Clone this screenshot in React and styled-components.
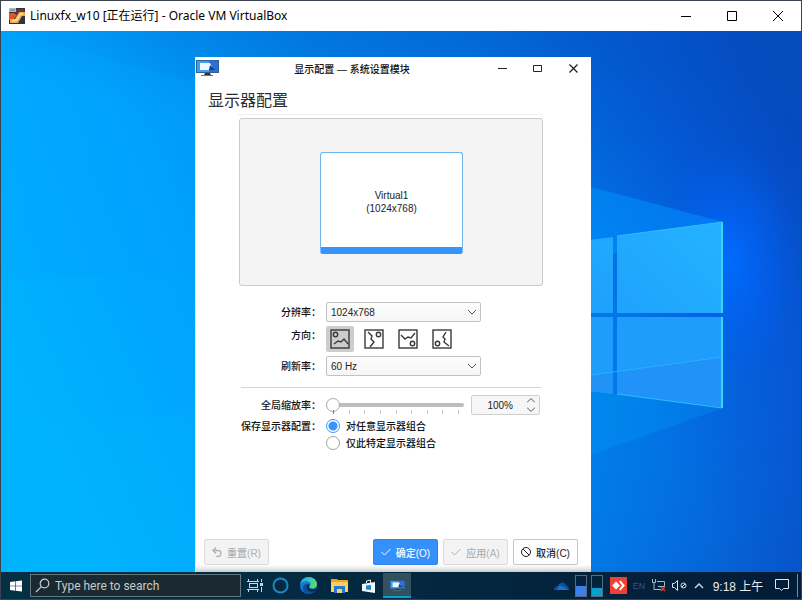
import React from "react";
import styled, { createGlobalStyle } from "styled-components";

const latin = `"Liberation Sans", "Noto Sans CJK SC", sans-serif`;

const GlobalStyle = createGlobalStyle`
  *, *::before, *::after { box-sizing: border-box; }
  html, body { margin: 0; background: #23262b; }
  body { font-family: ${latin}; font-size: 10px; color: #232323; }
  button, input, select { font: inherit; color: inherit; margin: 0; }
  button { padding: 0; border: 0; background: none; cursor: pointer; }
  svg { display: block; flex: none; }
`;

/* ---------- virtual machine frame ---------- */

const Machine = styled.div`
  display: flex;
  flex-direction: column;
  min-height: 100vh;
  border: 1px solid #3a4450;
`;

const MachineBar = styled.header`
  display: flex;
  align-items: center;
  height: 30px;
  padding-left: 8px;
  background: #fff;
  color: #000;
`;

const MachineTitle = styled.h1`
  flex: 1;
  margin: 0 0 0 5px;
  font: 400 12px/30px "Noto Sans", "Noto Sans CJK SC", sans-serif;
  white-space: nowrap;
`;

const FrameControl = styled.button`
  display: flex;
  align-items: center;
  justify-content: center;
  width: ${(p) => p.$width}px;
  height: ${(p) => p.$height}px;
`;

const Desktop = styled.main`
  position: relative;
  flex: 1;
  min-height: 541px;
  overflow: hidden;
  background: #0078e8;
`;

const Wallpaper = styled.svg`
  position: absolute;
  inset: 0;
  width: 100%;
  height: 100%;
`;

/* ---------- settings window ---------- */

const Window = styled.section`
  position: absolute;
  top: 26px;
  bottom: 0;
  left: 194px;
  display: flex;
  flex-direction: column;
  width: 396px;
  background: linear-gradient(to top, #c6cacc 0, #e4e6e7 3px, #fff 7px);
  border-left: 1px solid #d4effc;
`;

const WindowBar = styled.header`
  display: flex;
  align-items: flex-start;
  height: 25px;
`;

const WindowIcon = styled.div`
  padding-top: 3px;
`;

const WindowTitle = styled.h2`
  flex: 1;
  margin: 0;
  font-size: 10px;
  font-weight: 500;
  line-height: 25px;
  text-align: center;
  color: #111;
`;

const Heading = styled.h3`
  margin: 0;
  padding: 5px 0 0 12px;
  font-size: 16px;
  font-weight: 400;
  line-height: 27px;
  color: #2a2d30;
`;

const Content = styled.div`
  flex: 1;
  margin: 0 48px 0 43px;
  border-top: 1px solid #f1f1f1;
  padding-top: 3px;
`;

const Arrangement = styled.div`
  display: flex;
  justify-content: center;
  align-items: flex-start;
  height: 168px;
  padding: 33px 0 0 1px;
  border: 1px solid #cbcbcb;
  border-radius: 3px;
  background: #f4f4f4;
`;

const Screen = styled.div`
  display: flex;
  flex-direction: column;
  align-items: center;
  justify-content: center;
  width: 143px;
  height: 102px;
  padding-top: 4px;
  border: 1px solid #71b2f5;
  border-bottom: 7px solid #3794fb;
  border-radius: 3px;
  background: #fff;
  line-height: 13px;
`;

const Form = styled.form`
  display: grid;
  grid-template-columns: 80px 1fr;
  column-gap: 5px;
  padding: 0 2px;
`;

const Fields = styled.div`
  grid-column: 1 / -1;
  display: grid;
  grid-template-columns: subgrid;
  row-gap: ${(p) => p.$gap}px;
  align-items: center;
  padding-top: ${(p) => p.$top}px;
`;

const FieldName = styled.label`
  align-self: ${(p) => (p.$top ? "start" : "center")};
  padding-top: 2px;
  line-height: 16px;
  font-weight: 500;
  white-space: nowrap;
  text-align: right;
  color: #111;
`;

const Divider = styled.hr`
  grid-column: 1 / -1;
  width: 100%;
  margin: 11px 0 0;
  border: 0;
  border-top: 1px solid #d4d4d4;
`;

const SelectBox = styled.div`
  position: relative;
  width: 155px;
  svg {
    position: absolute;
    top: 6px;
    right: 5px;
    color: #555;
    pointer-events: none;
  }
`;

const Select = styled.select`
  display: block;
  width: 100%;
  height: 20px;
  padding: 0 4px;
  appearance: none;
  border: 1px solid #c2c2c2;
  border-radius: 2px;
  background: linear-gradient(#fdfdfd, #f6f6f6);
`;

const Orientations = styled.div`
  display: flex;
  gap: 6px;
`;

const OrientationButton = styled.button`
  display: flex;
  align-items: center;
  justify-content: center;
  width: 28px;
  height: 26px;
  border-radius: 2px;
  background: ${(p) => (p["aria-pressed"] ? "#cdcdcd" : "transparent")};
  color: #3a3a3a;
`;

const ScaleRow = styled.div`
  display: flex;
  align-items: center;
  gap: 7px;
`;

const ScaleTrack = styled.div`
  width: 138px;
  height: 20px;
`;

const Range = styled.input`
  display: block;
  width: 100%;
  height: 14px;
  margin: 3px 0 0;
  appearance: none;
  background: transparent;
  &::-webkit-slider-runnable-track {
    height: 4px;
    border-radius: 2px;
    background: #bdbdbd;
  }
  &::-webkit-slider-thumb {
    appearance: none;
    width: 14px;
    height: 14px;
    margin-top: -5px;
    border: 1px solid #a9a9a9;
    border-radius: 50%;
    background: #fff;
  }
`;

const Ticks = styled.div`
  display: flex;
  justify-content: space-between;
  margin-top: -2px;
  padding: 0 5px 0 7px;
`;

const Tick = styled.span`
  width: 1px;
  height: 4px;
  background: ${(p) => (p.$active ? "#3794fb" : "#c9c9c9")};
`;

const SpinBox = styled.div`
  display: flex;
  align-items: center;
  width: 69px;
  height: 20px;
  border: 1px solid #cfcfcf;
  border-radius: 2px;
  background: #f6f6f6;
`;

const SpinInput = styled.input`
  width: 41px;
  padding: 0;
  border: 0;
  background: transparent;
  text-align: right;
`;

const SpinArrows = styled.div`
  display: flex;
  flex: 1;
  flex-direction: column;
  align-items: center;
  padding-left: 10px;
  color: #555;
`;

const SpinButton = styled.button`
  display: flex;
  align-items: center;
  justify-content: center;
  width: 12px;
  height: 9px;
`;

const RadioGroup = styled.div`
  display: flex;
  flex-direction: column;
  font-weight: 500;
  color: #111;
`;

const Choice = styled.label`
  display: flex;
  align-items: center;
  gap: 6px;
  height: 17px;
`;

const Radio = styled.input`
  width: 14px;
  height: 14px;
  appearance: none;
  border: 1px solid #a2a2a2;
  border-radius: 50%;
  background: #fff;
  &:checked {
    border-color: #3794fb;
    background: radial-gradient(#3794fb 0 4px, #fff 5px);
  }
`;

const Actions = styled.footer`
  display: flex;
  gap: 5px;
  padding: 0 13px 7px 8px;
`;

const palettes = {
  plain: { bg: "#fefefe", line: "#c6c6c6", ink: "#1d1d1d" },
  muted: { bg: "#f3f3f3", line: "#dadada", ink: "#b0b0b0" },
  primary: { bg: "#3590fa", line: "#2e84ec", ink: "#fff" },
};

const ActionButton = styled.button`
  display: flex;
  align-items: center;
  justify-content: center;
  gap: 5px;
  width: 65px;
  height: 26px;
  margin-right: ${(p) => (p.$spread ? "auto" : "0")};
  border: 1px solid ${(p) => palettes[p.$tone].line};
  border-radius: 2px;
  background: ${(p) => palettes[p.$tone].bg};
  color: ${(p) => palettes[p.$tone].ink};
  font-weight: 500;
  white-space: nowrap;
`;

/* ---------- taskbar ---------- */

const Taskbar = styled.nav`
  display: flex;
  align-items: center;
  height: 27px;
  background: linear-gradient(to right, #043044, #03283f 50%, #031c37);
  color: #d8e0e6;
`;

const TaskButton = styled.button`
  display: flex;
  align-items: center;
  justify-content: center;
  width: ${(p) => p.$width}px;
  height: 25px;
  border-top: 2px solid transparent;
  border-bottom: 2px solid ${(p) => (p.$active ? "#0b9fd0" : "transparent")};
  background: ${(p) => (p.$active ? "#33505f" : "transparent")};
`;

const SearchBox = styled.label`
  display: flex;
  align-items: center;
  gap: 5px;
  width: 211px;
  height: 23px;
  padding-left: 4px;
  border: 1px solid #65757c;
  background: #1b2a31;
`;

const SearchInput = styled.input`
  flex: 1;
  min-width: 0;
  padding: 0;
  border: 0;
  outline: 0;
  background: transparent;
  font-family: Roboto, sans-serif;
  font-size: 12px;
  &::placeholder { color: #c3cacd; opacity: 1; }
`;

const Tray = styled.div`
  display: flex;
  align-items: center;
  align-self: stretch;
  margin-left: auto;
`;

const TrayButton = styled.button`
  display: flex;
  align-items: center;
  justify-content: center;
  width: ${(p) => p.$width}px;
  height: 27px;
`;

const Language = styled(TrayButton)`
  font-size: 9px;
  color: #35518f;
`;

const Clock = styled.time`
  width: 56px;
  font-size: 12px;
  text-align: center;
  white-space: nowrap;
  color: #e8edf0;
`;

const PeekDesktop = styled.button`
  width: 4px;
  height: 23px;
  border-left: 1px solid #7f8c99;
`;

const Meter = styled.div`
  display: flex;
  align-items: flex-end;
  width: 12px;
  height: 22px;
  border: 1px solid #566a7c;
`;

const MeterFill = styled.div`
  width: 100%;
  height: ${(p) => p.$level}px;
  background: ${(p) => p.$color};
`;

/* ---------- drawings ---------- */

const WallpaperArt = () => (
  <Wallpaper viewBox="1 31 800 541" preserveAspectRatio="none" aria-hidden="true">
    <defs>
      <linearGradient id="base" gradientUnits="userSpaceOnUse" x1="60" y1="480" x2="800" y2="150">
        <stop offset="0" stopColor="#00b2ff" />
        <stop offset="0.25" stopColor="#00a3fc" />
        <stop offset="0.5" stopColor="#0086ec" />
        <stop offset="0.7" stopColor="#0078e8" />
        <stop offset="0.88" stopColor="#0458dc" />
        <stop offset="1" stopColor="#0548c4" />
      </linearGradient>
      <linearGradient id="shade" gradientUnits="userSpaceOnUse" x1="520" y1="20" x2="470" y2="200">
        <stop offset="0" stopColor="#0450b8" stopOpacity="0.45" />
        <stop offset="1" stopColor="#0450b8" stopOpacity="0" />
      </linearGradient>
      <linearGradient id="beam" x1="0" y1="0" x2="1" y2="0">
        <stop offset="0" stopColor="#00a4ff" stopOpacity="0.25" />
        <stop offset="1" stopColor="#0090ff" stopOpacity="0.55" />
      </linearGradient>
      <radialGradient id="glow">
        <stop offset="0" stopColor="#006cff" stopOpacity="0.95" />
        <stop offset="1" stopColor="#0060f0" stopOpacity="0" />
      </radialGradient>
      <linearGradient id="pane" x1="0" y1="0.8" x2="1" y2="0.4">
        <stop offset="0" stopColor="#1c98fb" />
        <stop offset="1" stopColor="#23b0ff" />
      </linearGradient>
      <linearGradient id="corner" gradientUnits="userSpaceOnUse" x1="600" y1="420" x2="800" y2="560">
        <stop offset="0" stopColor="#0a60d8" stopOpacity="0" />
        <stop offset="1" stopColor="#0a4cc0" stopOpacity="0.7" />
      </linearGradient>
    </defs>
    <rect x="1" y="31" width="800" height="541" fill="url(#base)" />
    <rect x="1" y="31" width="800" height="541" fill="url(#shade)" />
    <rect x="1" y="31" width="800" height="541" fill="url(#corner)" />
    <ellipse cx="730" cy="262" rx="68" ry="120" fill="url(#glow)" />
    <path d="M723 222 591 187 0 30v250l591-20z" fill="url(#beam)" />
    <path d="M723 408 591 391 0 425v147h260z" fill="#00b8ff" opacity="0.18" />
    <path d="M480 254 613 237v76H480zM617 236l106-14v91H617z" fill="url(#pane)" />
    <path d="M480 317h133v77l-133-17zM617 317h106v91l-106-14z" fill="#1f9dfd" />
    <path d="m480 391 133-19v22l-133-17zM617 371l106-14v51l-106-14z" fill="#2092f8" />
    <path d="m591 375 132-18" stroke="#2fb7ff" strokeWidth="1" opacity="0.8" />
    <path d="m617 236 105-14m0 186-105-14" fill="none" stroke="#3cc4fd" strokeWidth="1" opacity="0.8" />
    <path d="M722 222v91m0 4v91" stroke="#35d6fc" strokeWidth="2" />
  </Wallpaper>
);

const AppMark = () => (
  <svg width="16" height="16" viewBox="0 0 16 16" aria-hidden="true">
    <rect width="16" height="16" fill="#30343f" />
    <path d="M0 5h5l3 2-3 4-5 1z" fill="#e2551f" />
    <path d="M1 15v-4h5l4-7h6v4h-3l-4 7z" fill="#f6a840" />
    <path d="M3 14v-2l4-1 4-6h3v2h-2l-4 6z" fill="#fbd79a" />
    <path d="M8 1h7v3h-5L8 7 6 4z" fill="#6b3434" />
    <path d="M0 0h7v4H0z" fill="#b9bec6" />
    <path d="M1 2h5" stroke="#666c78" />
  </svg>
);

const DisplayMark = ({ width = 23, height = 17 }) => (
  <svg width={width} height={height} viewBox="0 0 23 17" aria-hidden="true">
    <path d="M0 0h23v13H0z" fill="#35618f" />
    <path d="M1 1h14v11H1z" fill="#36a1f5" />
    <path d="M13 1h9v11h-9z" fill="#2a6fdc" />
    <path d="M4 3h10l3 6v1H4z" fill="#eef8fe" />
    <path d="m14 5 5 5h-6z" fill="#123f86" />
    <path d="M9 13h5l1 2H8z" fill="#2b333b" />
    <path d="M5 15h12v1H5z" fill="#6c7880" />
  </svg>
);

const Glyph = ({ size, d, width = 1, height = size }) => (
  <svg
    width={size}
    height={height}
    viewBox={`0 0 ${size} ${height}`}
    fill="none"
    stroke="currentColor"
    strokeWidth={width}
    aria-hidden="true"
  >
    <path d={d} />
  </svg>
);

const orientationArt = [
  { name: "横向", dot: [5.5, 5.5], line: "m4 15 4-3 3 1 3-3 4 5" },
  { name: "向右旋转", dot: [14.5, 5.5], line: "m4 3 4 4-1 3 3 3-4 5" },
  { name: "倒置", dot: [14.5, 14.5], line: "m3 6 4 4 3-2 3 1 4-5" },
  { name: "向左旋转", dot: [5.5, 14.5], line: "m14 3-3 5 2 2-1 3 5 4" },
];

const OrientationArt = ({ dot, line }) => (
  <svg width="20" height="20" viewBox="0 0 20 20" fill="none" stroke="currentColor" strokeWidth="1.4" aria-hidden="true">
    <rect x="1" y="1" width="18" height="18" />
    <circle cx={dot[0]} cy={dot[1]} r="2.2" />
    <path d={line} />
  </svg>
);

const StartMark = () => (
  <svg width="12" height="12" viewBox="0 0 12 12" fill="#fff" aria-hidden="true">
    <path d="M0 2l5-.7v4.400H0zM5.600 1.200 12 .4v5.300H5.600zM0 6.300h5v4.400L0 10zM5.600 6.300H12v5.300l-6.400-.8z" />
  </svg>
);

const SearchMark = () => (
  <svg width="15" height="15" viewBox="0 0 15 15" fill="none" stroke="#c6d0d4" strokeWidth="1.2" aria-hidden="true">
    <circle cx="9.5" cy="5.5" r="4.3" />
    <path d="M6.400 8.600 1 14" />
  </svg>
);

const TaskViewMark = () => (
  <svg width="16" height="13" viewBox="0 0 16 13" fill="none" stroke="#cdd8dd" aria-hidden="true">
    <rect x="2.5" y="4.5" width="8" height="4" />
    <path d="M0 2.500h12M0 10.500h12M1.500 0v2M10.500 0v2M1.500 11v2M10.500 11v2M14.500 0v3M14.500 8v5" />
    <rect x="13" y="4" width="3" height="3" fill="#cdd8dd" stroke="none" />
  </svg>
);

const CortanaMark = () => (
  <svg width="17" height="17" viewBox="0 0 17 17" fill="none" aria-hidden="true">
    <circle cx="8.5" cy="8.5" r="7" stroke="#1c86c4" strokeWidth="2" />
  </svg>
);

const EdgeMark = () => (
  <svg width="17" height="17" viewBox="0 0 24 24" aria-hidden="true">
    <defs>
      <linearGradient id="edgeTop" x1="0" y1="0" x2="1" y2="0.3">
        <stop offset="0" stopColor="#1f9be0" />
        <stop offset="0.6" stopColor="#34c8c8" />
        <stop offset="1" stopColor="#5edb58" />
      </linearGradient>
    </defs>
    <circle cx="12" cy="12" r="12" fill="#1478cf" />
    <path d="M0 11C1 4 6 0 12 0c7 0 12 5 12 10 0 4-3 6-6 6-3 0-5-1-5-2s2-1 2-4c0-2-2-4-5-4-5 0-9 2-10 5z" fill="url(#edgeTop)" />
    <path d="M9 12c-1 5 3 9 8 9 2 0 4-1 5-2-2 3-6 5-10 5-5-1-8-4-8-8 0-3 2-6 5-6 2 0 3 1 3 1-2 0-3 1-3 1z" fill="#0c4f9e" />
    <path d="M13 14c0 2 3 4 6 3 1 0 3-1 4-2l-1 4c-2 2-4 2-6 2-4 0-7-3-7-7 0-2 2-4 4-4 1 2-1 3 0 4z" fill="#062f4a" />
  </svg>
);

const FolderMark = () => (
  <svg width="17" height="15" viewBox="0 0 17 15" aria-hidden="true">
    <path d="M0 1h6l1 1h10v3H0z" fill="#e9a529" />
    <path d="M0 4h17v10H0z" fill="#fbd05b" />
    <path d="M3 8h11v7H3z" fill="#2377d4" />
    <path d="M6 11h5v4H6z" fill="#fbd05b" />
  </svg>
);

const StoreMark = () => (
  <svg width="13" height="14" viewBox="0 0 13 14" aria-hidden="true">
    <path d="M4.500 4V2l4-1v3" fill="none" stroke="#e8f0f4" />
    <path d="m0 5 13-2v11L0 12z" fill="#f2f7fa" />
    <path d="m4 6.500 5-.5v5l-5-.5z" fill="#1687d9" />
  </svg>
);

const CloudMark = () => (
  <svg width="15" height="10" viewBox="0 0 15 10" aria-hidden="true">
    <path d="M0 9c0-3 2-4 4-4 1-4 6-5 8-1 2 1 3 3 3 5z" fill="#0f4f9e" />
    <path d="M3 9c1-4 3-5 5-4l6 4z" fill="#1a72cc" />
  </svg>
);

const RemoteMark = () => (
  <svg width="17" height="17" viewBox="0 0 17 17" aria-hidden="true">
    <rect width="17" height="17" fill="#ee4035" />
    <path d="m2 8.500 4-4 4 4-4 4z" fill="#fff" />
    <path d="m9 4.500 1.500-1L15 8.500l-4.500 5-1.500-1 3-4z" fill="#fff" />
  </svg>
);

const NetworkMark = () => (
  <svg width="15" height="13" viewBox="0 0 15 13" fill="none" stroke="#aab8c3" aria-hidden="true">
    <path d="M1.500 0v3.500h3V0M3 4v6.500h5M6 2.500h7.500v5H7M8 10.500h2" />
    <path d="m10 8 4 4m0-4-4 4" stroke="#d83b3b" strokeWidth="1.5" />
  </svg>
);

const VolumeMark = () => (
  <svg width="15" height="11" viewBox="0 0 15 11" fill="none" stroke="#dfe6ea" aria-hidden="true">
    <path d="M.5 3.500h2l3-3v10l-3-3h-2z" />
    <circle cx="11.5" cy="5.500" r="2.5" />
    <path d="m10 7 3-3" />
  </svg>
);

const NoticeMark = () => (
  <svg width="14" height="13" viewBox="0 0 14 13" fill="none" stroke="#dfe6ea" aria-hidden="true">
    <path d="M.5 .5h13v9h-5l-2 2-2-2h-4z" />
  </svg>
);

/* ---------- page ---------- */

function Dropdown({ id, value, options }) {
  return (
    <SelectBox>
      <Select id={id} defaultValue={value}>
        {options.map((o) => (
          <option key={o}>{o}</option>
        ))}
      </Select>
      <Glyph size={8} d="m0 2 4 4 4-4" />
    </SelectBox>
  );
}

function DisplaySettings() {
  const [orientation, setOrientation] = React.useState(0);
  const [scale, setScale] = React.useState(100);
  const step = (by) => setScale((s) => Math.min(300, Math.max(100, s + by)));

  return (
    <Window aria-labelledby="window-title">
      <WindowBar>
        <WindowIcon><DisplayMark /></WindowIcon>
        <WindowTitle id="window-title">显示配置 — 系统设置模块</WindowTitle>
        <FrameControl $width={35} $height={23} aria-label="最小化">
          <Glyph size={9} d="M0 4.500h9" />
        </FrameControl>
        <FrameControl $width={35} $height={23} aria-label="最大化">
          <Glyph size={9} d="M.5 1.500h8v6h-8z" />
        </FrameControl>
        <FrameControl $width={36} $height={23} aria-label="关闭">
          <Glyph size={9} d="m.5 .5 8 8m0-8-8 8" width={1.3} />
        </FrameControl>
      </WindowBar>
      <Heading>显示器配置</Heading>
      <Content>
        <Arrangement>
          <Screen>
            <span>Virtual1</span>
            <span>(1024x768)</span>
          </Screen>
        </Arrangement>
        <Form>
          <Fields $gap={4} $top={16}>
            <FieldName htmlFor="resolution">分辨率：</FieldName>
            <Dropdown id="resolution" value="1024x768" options={["1024x768", "800x600"]} />
            <FieldName as="span" id="orientation" $top>方向：</FieldName>
            <Orientations role="group" aria-labelledby="orientation">
              {orientationArt.map((o, i) => (
                <OrientationButton
                  key={o.name}
                  type="button"
                  aria-label={o.name}
                  aria-pressed={orientation === i}
                  onClick={() => setOrientation(i)}
                >
                  <OrientationArt dot={o.dot} line={o.line} />
                </OrientationButton>
              ))}
            </Orientations>
            <FieldName htmlFor="refresh">刷新率：</FieldName>
            <Dropdown id="refresh" value="60 Hz" options={["60 Hz"]} />
          </Fields>
          <Divider />
          <Fields $gap={2} $top={7}>
            <FieldName htmlFor="scale">全局缩放率：</FieldName>
            <ScaleRow>
              <ScaleTrack>
                <Range
                  id="scale"
                  type="range"
                  min="100"
                  max="300"
                  step="25"
                  value={scale}
                  onChange={(e) => setScale(Number(e.target.value))}
                />
                <Ticks>
                  {Array.from({ length: 9 }, (_, i) => (
                    <Tick key={i} $active={i === 0} />
                  ))}
                </Ticks>
              </ScaleTrack>
              <SpinBox>
                <SpinInput aria-label="缩放率" value={`${scale}%`} readOnly />
                <SpinArrows>
                  <SpinButton type="button" aria-label="增加" onClick={() => step(25)}>
                    <Glyph size={8} height={5} d="m0 4.500 4-4 4 4" />
                  </SpinButton>
                  <SpinButton type="button" aria-label="减少" onClick={() => step(-25)}>
                    <Glyph size={8} height={5} d="m0 .5 4 4 4-4" />
                  </SpinButton>
                </SpinArrows>
              </SpinBox>
            </ScaleRow>
            <FieldName as="span" id="save" $top>保存显示器配置：</FieldName>
            <RadioGroup role="radiogroup" aria-labelledby="save">
              <Choice>
                <Radio type="radio" name="save" defaultChecked />
                对任意显示器组合
              </Choice>
              <Choice>
                <Radio type="radio" name="save" />
                仅此特定显示器组合
              </Choice>
            </RadioGroup>
          </Fields>
        </Form>
      </Content>
      <Actions>
        <ActionButton $tone="muted" $spread disabled>
          <Glyph size={10} d="M4 .5 1 3.500l3 3M1 3.500h5a3 3 0 0 1 0 6H4" width={1.3} />
          重置(R)
        </ActionButton>
        <ActionButton $tone="primary">
          <Glyph size={10} d="m.5 5 3 3 6-6" />
          确定(O)
        </ActionButton>
        <ActionButton $tone="muted" disabled>
          <Glyph size={10} d="m.5 5 3 3 6-6" />
          应用(A)
        </ActionButton>
        <ActionButton $tone="plain">
          <Glyph size={10} d="M5 .5a4.500 4.500 0 1 1 0 9 4.500 4.500 0 0 1 0-9M2 2l6 6" />
          取消(C)
        </ActionButton>
      </Actions>
    </Window>
  );
}

export default function App() {
  return (
    <Machine>
      <GlobalStyle />
      <MachineBar>
        <AppMark />
        <MachineTitle>Linuxfx_w10 [正在运行] - Oracle VM VirtualBox</MachineTitle>
        <FrameControl $width={46} $height={30} aria-label="Minimize">
          <Glyph size={12} d="M1 6.500h10" />
        </FrameControl>
        <FrameControl $width={46} $height={30} aria-label="Maximize">
          <Glyph size={12} d="M1.500 1.500h9v9h-9z" />
        </FrameControl>
        <FrameControl $width={46} $height={30} aria-label="Close">
          <Glyph size={12} d="m1 1 10 10m0-10L1 11" />
        </FrameControl>
      </MachineBar>
      <Desktop>
        <WallpaperArt />
        <DisplaySettings />
      </Desktop>
      <Taskbar>
        <TaskButton $width={29} aria-label="Start"><StartMark /></TaskButton>
        <SearchBox>
          <SearchMark />
          <SearchInput type="search" placeholder="Type here to search" aria-label="Search" />
        </SearchBox>
        <TaskButton $width={28} aria-label="Task view"><TaskViewMark /></TaskButton>
        <TaskButton $width={22} aria-label="Cortana"><CortanaMark /></TaskButton>
        <TaskButton $width={34} aria-label="Edge"><EdgeMark /></TaskButton>
        <TaskButton $width={28} aria-label="Files"><FolderMark /></TaskButton>
        <TaskButton $width={30} aria-label="Store"><StoreMark /></TaskButton>
        <TaskButton $width={28} $active aria-label="Display settings"><DisplayMark width={15} height={12} /></TaskButton>
        <Tray>
          <TrayButton $width={21} aria-label="OneDrive"><CloudMark /></TrayButton>
          <TrayButton $width={18} aria-label="CPU"><Meter><MeterFill $level={10} $color="#3c80ee" /></Meter></TrayButton>
          <TrayButton $width={14} aria-label="Memory"><Meter><MeterFill $level={8} $color="#06a2cf" /></Meter></TrayButton>
          <TrayButton $width={28} aria-label="AnyDesk"><RemoteMark /></TrayButton>
          <Language $width={14}>EN</Language>
          <TrayButton $width={24} aria-label="Network"><NetworkMark /></TrayButton>
          <TrayButton $width={18} aria-label="Volume"><VolumeMark /></TrayButton>
          <TrayButton $width={22} aria-label="Show hidden icons">
            <Glyph size={10} height={6} d="m1 5 4-4 4 4" width={1.3} />
          </TrayButton>
          <Clock>9:18 上午</Clock>
          <TrayButton $width={31} aria-label="Notifications"><NoticeMark /></TrayButton>
          <PeekDesktop aria-label="Show desktop" />
        </Tray>
      </Taskbar>
    </Machine>
  );
}
